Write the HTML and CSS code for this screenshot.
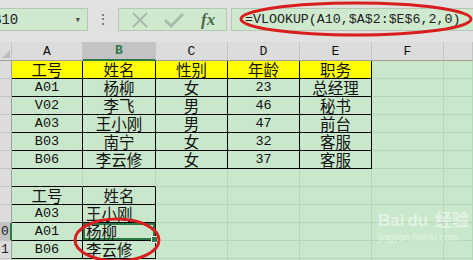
FILE: index.html
```html
<!DOCTYPE html>
<html>
<head>
  <title>VLOOKUP</title>
  <link rel="stylesheet" href="styles.css">
</head>
<body>
  <div class="app">

    <!-- Formula bar: name box, buttons, formula -->
    <div class="formula-bar">
      <div class="name-box">
        <span class="name-text">B10</span>
        <span class="name-arrow">&#9662;</span>
      </div>
      <div class="grip">&#8942;</div>
      <div class="fx-btns">
        <svg class="btn-x" width="18" height="16" viewBox="0 0 18 16">
          <path d="M2 1 L16 15 M16 1 L2 15" stroke="#a9bba9" stroke-width="2" fill="none"/>
        </svg>
        <svg class="btn-ok" width="22" height="16" viewBox="0 0 22 16">
          <path d="M2 8 L8 14 L20 2" stroke="#a9bba9" stroke-width="3" fill="none"/>
        </svg>
        <span class="fx">fx</span>
      </div>
      <div class="formula">=VLOOKUP(A10,$A$2:$E$6,2,0)</div>
    </div>

    <!-- Sheet grid -->
    <div class="sheet">
      <table class="grid">
        <colgroup>
          <col class="c-rh"><col class="c-a"><col class="c-b"><col class="c-c"><col class="c-d"><col class="c-e"><col class="c-f"><col class="c-g">
        </colgroup>
        <tr class="head">
          <td class="corner"><span class="tri"></span></td>
          <td class="ch">A</td><td class="ch sel">B</td><td class="ch">C</td><td class="ch">D</td><td class="ch">E</td><td class="ch">F</td><td class="ch"></td>
        </tr>
        <tr>
          <td class="rh"></td>
          <td class="bx y">工号</td><td class="bx y">姓名</td><td class="bx y">性别</td><td class="bx y">年龄</td><td class="bx y">职务</td><td></td><td></td>
        </tr>
        <tr>
          <td class="rh"></td>
          <td class="bx num">A01</td><td class="bx">杨柳</td><td class="bx">女</td><td class="bx num">23</td><td class="bx">总经理</td><td></td><td></td>
        </tr>
        <tr>
          <td class="rh"></td>
          <td class="bx num">V02</td><td class="bx">李飞</td><td class="bx">男</td><td class="bx num">46</td><td class="bx">秘书</td><td></td><td></td>
        </tr>
        <tr>
          <td class="rh"></td>
          <td class="bx num">A03</td><td class="bx">王小刚</td><td class="bx">男</td><td class="bx num">47</td><td class="bx">前台</td><td></td><td></td>
        </tr>
        <tr>
          <td class="rh"></td>
          <td class="bx num">B03</td><td class="bx">南宁</td><td class="bx">女</td><td class="bx num">32</td><td class="bx">客服</td><td></td><td></td>
        </tr>
        <tr>
          <td class="rh"></td>
          <td class="bx num">B06</td><td class="bx">李云修</td><td class="bx">女</td><td class="bx num">37</td><td class="bx">客服</td><td></td><td></td>
        </tr>
        <tr>
          <td class="rh"></td>
          <td class="top-b"></td><td class="top-b"></td><td></td><td></td><td></td><td></td><td></td>
        </tr>
        <tr>
          <td class="rh"></td>
          <td class="bx">工号</td><td class="bx">姓名</td><td></td><td></td><td></td><td></td><td></td>
        </tr>
        <tr>
          <td class="rh"></td>
          <td class="bx num">A03</td><td class="bx left">王小刚</td><td></td><td></td><td></td><td></td><td></td>
        </tr>
        <tr>
          <td class="rh rh-sel"><span>0</span></td>
          <td class="bx num">A01</td><td class="bx left active">杨柳<span class="handle"></span></td><td></td><td></td><td></td><td></td><td></td>
        </tr>
        <tr>
          <td class="rh"><span>1</span></td>
          <td class="bx num">B06</td><td class="bx left">李云修</td><td></td><td></td><td></td><td></td><td></td>
        </tr>
        <tr>
          <td class="rh"></td>
          <td></td><td></td><td></td><td></td><td></td><td></td><td></td>
        </tr>
      </table>

      <!-- watermark -->
      <div class="watermark">
        <div class="wm-logo">Bai<span class="wm-du">du</span> 经验</div>
        <div class="wm-url">jingyan.baidu.com</div>
      </div>
    </div>

    <!-- red hand-drawn circles over the content -->
    <svg class="marks" width="473" height="260" viewBox="0 0 473 260">
      <ellipse cx="356" cy="19" rx="115" ry="16" stroke="#d81e1e" stroke-width="3" fill="none"/>
      <ellipse cx="117" cy="240" rx="42" ry="21" stroke="#d81e1e" stroke-width="3" fill="none"/>
    </svg>
  </div>
</body>
</html>
```

FILE: styles.css
```css
body {
  margin: 0;
  overflow: hidden;
  background: #dedede;
  font-family: "Liberation Mono", "Noto Sans CJK SC", monospace;
}
.app {
  position: relative;
  width: 473px;
  height: 260px;
  overflow: hidden;
}
.formula-bar {
  height: 42px;
  display: flex;
  align-items: center;
  background: #e1e1e1;
  box-sizing: border-box;
  padding-bottom: 3px;
}
.name-box {
  width: 90px;
  height: 23px;
  margin-left: -2px;
  display: flex;
  align-items: center;
  justify-content: space-between;
  background: #cfe9cf;
  border: 1px solid #b4c8b4;
  box-sizing: border-box;
}
.name-text {
  font-size: 14px;
  color: #222;
  margin-left: -6px;
}
.name-arrow {
  font-size: 11px;
  color: #555;
  margin-right: 6px;
}
.grip {
  width: 30px;
  text-align: center;
  color: #666;
  font-size: 14px;
}
.fx-btns {
  width: 109px;
  height: 23px;
  display: flex;
  align-items: center;
  background: #cfe9cf;
  border: 1px solid #b4c8b4;
  box-sizing: border-box;
}
.btn-x {
  margin-left: 12px;
}
.btn-ok {
  margin-left: 14px;
}
.fx {
  margin-left: 16px;
  font-family: "Liberation Serif", serif;
  font-style: italic;
  font-weight: bold;
  font-size: 17px;
  color: #4d6b4d;
}
.formula {
  flex: 1;
  height: 23px;
  margin-left: 4px;
  padding-left: 13px;
  line-height: 22px;
  font-size: 13.3px;
  color: #222;
  background: #cfe9cf;
  border: 1px solid #b4c8b4;
  border-right: none;
  box-sizing: border-box;
  white-space: nowrap;
}
.sheet {
  position: relative;
  background: #c9e8cb;
}
.grid {
  border-collapse: separate;
  border-spacing: 0;
  table-layout: fixed;
  width: 473px;
}
.c-rh { width: 12px; }
.c-a { width: 71px; }
.c-b { width: 73px; }
.c-c { width: 72px; }
.c-d { width: 72px; }
.c-e { width: 72px; }
.c-f { width: 72px; }
.grid tr {
  height: 18px;
}
.grid td {
  padding: 0;
  height: 17px;
  border-right: 1px solid #b5d7b7;
  border-bottom: 1px solid #b5d7b7;
  text-align: center;
  font-size: 15.5px;
  line-height: 17px;
  color: #111;
  white-space: nowrap;
  font-family: "Noto Sans CJK SC", sans-serif;
}
.grid .head {
  height: 17px;
}
.grid .head td {
  height: 16px;
  background: #dcdcdc;
  border-right: 1px solid #c4c4c4;
  border-bottom: 1px solid #9e9e9e;
  font-family: "Liberation Mono", monospace;
  font-size: 13px;
  line-height: 17px;
}
.grid .head .sel {
  background: #c3c3c3;
  color: #2d7a45;
  font-weight: bold;
  border-bottom: 2px solid #2d7a45;
}
.corner {
  position: relative;
}
.tri {
  position: absolute;
  right: 1px;
  bottom: 2px;
  width: 0;
  height: 0;
  border-left: 8px solid transparent;
  border-bottom: 8px solid #bdbdbd;
}
.grid td.rh {
  background: #dcdcdc;
  border-right: 1px solid #9e9e9e;
  border-bottom: 1px solid #c4c4c4;
  font-family: "Liberation Mono", monospace;
  font-size: 13px;
  text-align: left;
  color: #222;
  overflow: hidden;
}
.grid td.rh span {
  margin-left: 1px;
}
.grid td.rh-sel {
  background: #c3c3c3;
  border-right: 2px solid #2d7a45;
}
.grid td.bx {
  border-right: 1px solid #000;
  border-bottom: 1px solid #000;
}
.grid td.top-b {
  border-bottom: 1px solid #000;
}
.grid td.y {
  background: #ffff00;
}
.grid td.num {
  font-family: "Liberation Mono", monospace;
  font-size: 13.5px;
  height: 16px;
  padding-top: 1px;
  line-height: 16px;
}
.grid td.left {
  text-align: left;
  padding-left: 3px;
}
.grid td.active {
  position: relative;
  box-shadow: inset 0 0 0 2px #2d7a45;
}
.handle {
  position: absolute;
  right: -3px;
  bottom: -3px;
  width: 5px;
  height: 5px;
  background: #2d7a45;
  border: 1px solid #fff;
}
.watermark {
  position: absolute;
  left: 378px;
  top: 168px;
  white-space: nowrap;
  color: rgba(255, 255, 255, 0.5);
  font-family: "Liberation Sans", "Noto Sans CJK SC", sans-serif;
}
.wm-logo {
  font-size: 17px;
  line-height: 22px;
  font-weight: bold;
}
.wm-du {
  margin-left: 3px;
  margin-right: 2px;
}
.wm-url {
  font-size: 10px;
  line-height: 12px;
}
.marks {
  position: absolute;
  left: 0;
  top: 0;
  pointer-events: none;
}
```
